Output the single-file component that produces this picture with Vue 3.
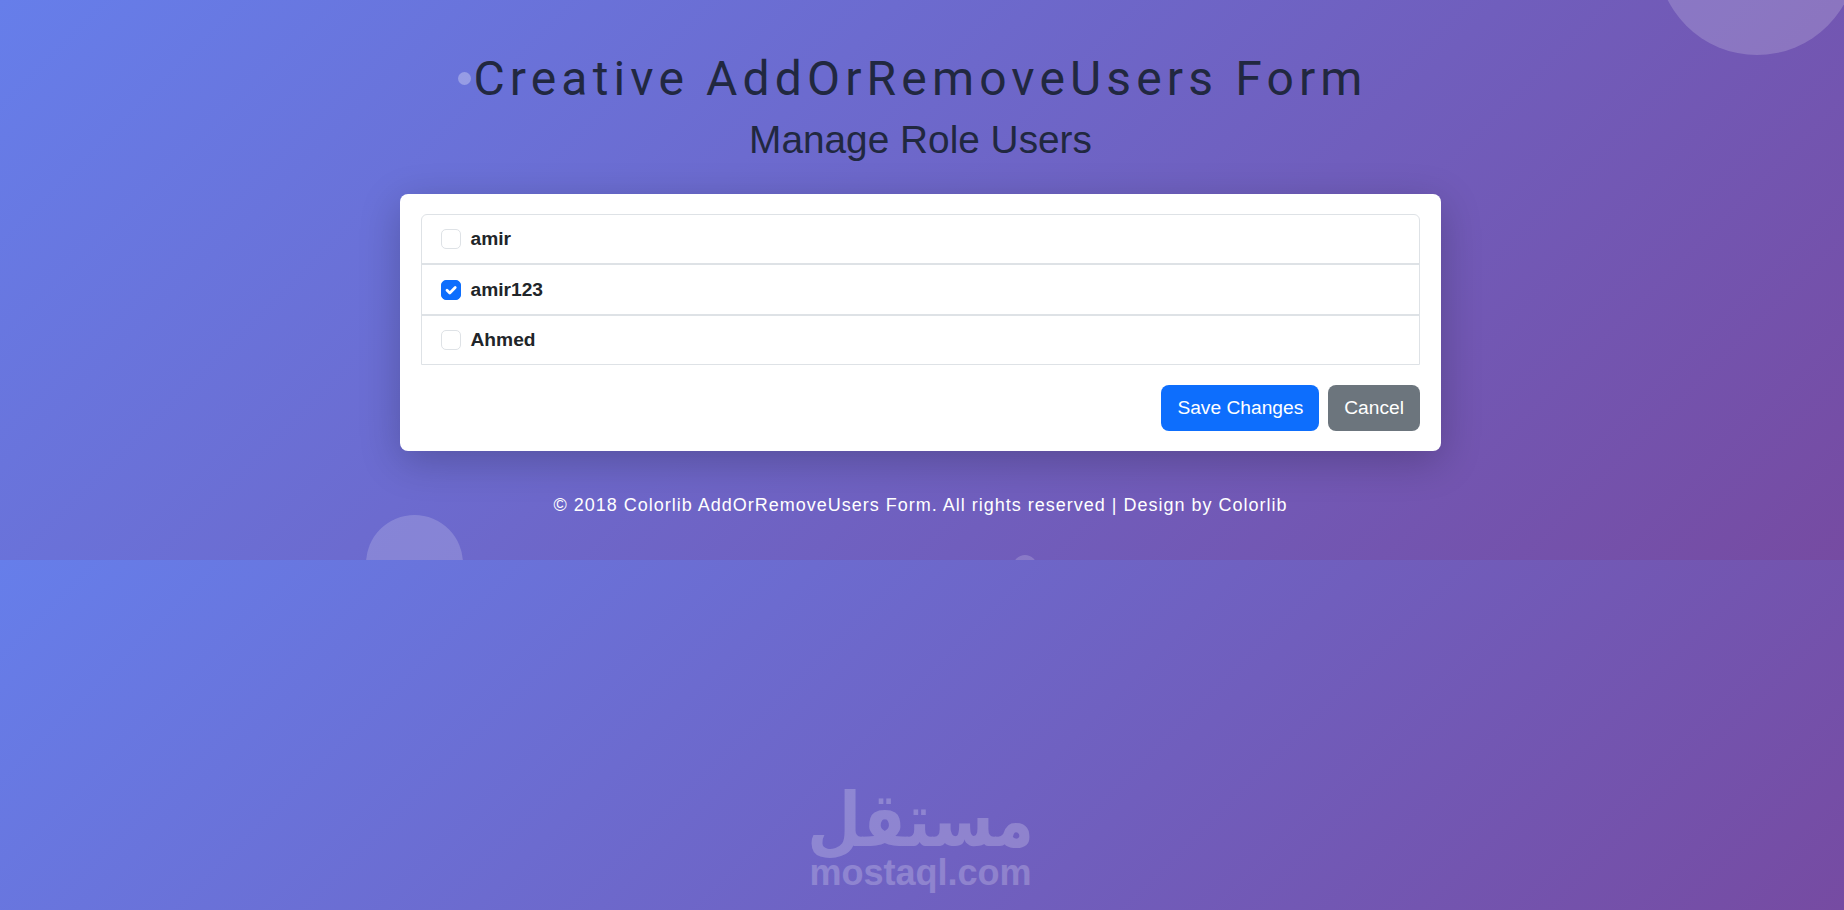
<script setup>
const users = [
  { id: 1, name: 'amir', checked: false },
  { id: 2, name: 'amir123', checked: true },
  { id: 3, name: 'Ahmed', checked: false },
]
</script>

<template>
  <div class="page">
    <section class="hero">
      <span class="bubble bubble-top"></span>
      <span class="bubble bubble-left"></span>
      <span class="bubble bubble-small"></span>
      <span class="bubble bubble-dot"></span>

      <h1 class="title">Creative AddOrRemoveUsers Form</h1>
      <h2 class="subtitle">Manage Role Users</h2>

      <form class="card" @submit.prevent>
        <ul class="user-list">
          <li v-for="user in users" :key="user.id" class="user-row">
            <span class="check" :class="{ checked: user.checked }">
              <svg v-if="user.checked" viewBox="0 0 20 20" width="20" height="20">
                <path d="M6 10.2l2.8 2.8 5.4-5.4" fill="none" stroke="#fff" stroke-width="2.8" stroke-linecap="round" stroke-linejoin="round" />
              </svg>
            </span>
            <span class="user-name">{{ user.name }}</span>
          </li>
        </ul>
        <div class="actions">
          <button type="button" class="btn btn-primary">Save Changes</button>
          <button type="button" class="btn btn-secondary">Cancel</button>
        </div>
      </form>

      <p class="copyright">© 2018 Colorlib AddOrRemoveUsers Form. All rights reserved | Design by Colorlib</p>
    </section>

    <section class="lower">
      <div class="watermark">
        <span class="watermark-ar">مستقل</span>
        <span class="watermark-en">mostaql.com</span>
      </div>
    </section>
  </div>
</template>

<style scoped>
.page {
  font-family: "Liberation Sans", Arial, sans-serif;
}

.hero,
.lower {
  background: linear-gradient(135deg, #667eea 0%, #764ba2 100%);
}

.hero {
  position: relative;
  height: 560px;
  overflow: hidden;
  padding: 47px 3px 0 0;
  box-sizing: border-box;
  display: flex;
  flex-direction: column;
  align-items: center;
}

.bubble {
  position: absolute;
  border-radius: 50%;
  background: rgba(255, 255, 255, 0.18);
}

.bubble-top {
  width: 200px;
  height: 200px;
  left: 1657px;
  top: -145px;
}

.bubble-left {
  width: 97px;
  height: 97px;
  left: 366px;
  top: 515px;
}

.bubble-small {
  width: 24px;
  height: 24px;
  left: 1013px;
  top: 555px;
}

.bubble-dot {
  width: 13px;
  height: 13px;
  left: 458px;
  top: 72px;
  background: rgba(255, 255, 255, 0.3);
}

.title {
  margin: 0;
  font-family: Roboto, sans-serif;
  font-size: 48px;
  font-weight: 400;
  line-height: 64px;
  letter-spacing: 5.15px;
  color: #212840;
}

.subtitle {
  margin: 5px 0 0;
  font-size: 38.8px;
  font-weight: 400;
  line-height: 48px;
  color: #212840;
}

.card {
  width: 1041px;
  margin-top: 30px;
  padding: 20px 21px;
  box-sizing: border-box;
  background: #fff;
  border-radius: 8px;
  box-shadow: 0 10px 40px rgba(0, 0, 0, 0.22);
}

.user-list {
  list-style: none;
  margin: 0;
  padding: 0;
  border: 1px solid #dee2e6;
  border-radius: 6px 6px 0 0;
}

.user-row {
  display: flex;
  align-items: center;
  height: 48.4px;
  padding: 0 19px;
  border-top: 2px solid #dee2e6;
}

.user-row:first-child {
  border-top: 0;
}

.check {
  width: 20px;
  height: 20px;
  box-sizing: border-box;
  border: 1px solid #dee2e6;
  border-radius: 5px;
  margin-right: 9.5px;
  position: relative;
}

.check.checked {
  background: #0d6efd;
  border-color: #0d6efd;
}

.check svg {
  position: absolute;
  left: -1px;
  top: -1px;
}

.user-name {
  font-size: 19.2px;
  font-weight: 700;
  color: #212529;
}

.actions {
  display: flex;
  justify-content: flex-end;
  gap: 9px;
  margin-top: 20px;
}

.btn {
  height: 46px;
  padding: 0 16px;
  border: 0;
  border-radius: 8px;
  font-family: inherit;
  font-size: 19.2px;
  color: #fff;
}

.btn-primary {
  background: #0d6efd;
}

.btn-secondary {
  background: #6c757d;
}

.copyright {
  margin: 42px 0 0;
  font-size: 18px;
  line-height: 24px;
  letter-spacing: 1px;
  color: #fff;
}

.lower {
  height: 350px;
  display: flex;
  justify-content: center;
  align-items: flex-end;
  padding-right: 3px;
  box-sizing: border-box;
}

.watermark {
  display: flex;
  flex-direction: column;
  align-items: center;
  margin-bottom: 19px;
  color: #fff;
  opacity: 0.22;
  font-weight: 700;
}

.watermark-ar {
  font-family: "DejaVu Sans", sans-serif;
  font-size: 62px;
  line-height: 60px;
  margin-bottom: 4px;
  transform: scaleY(1.2);
}

.watermark-en {
  font-size: 36px;
  line-height: 36px;
}
</style>
